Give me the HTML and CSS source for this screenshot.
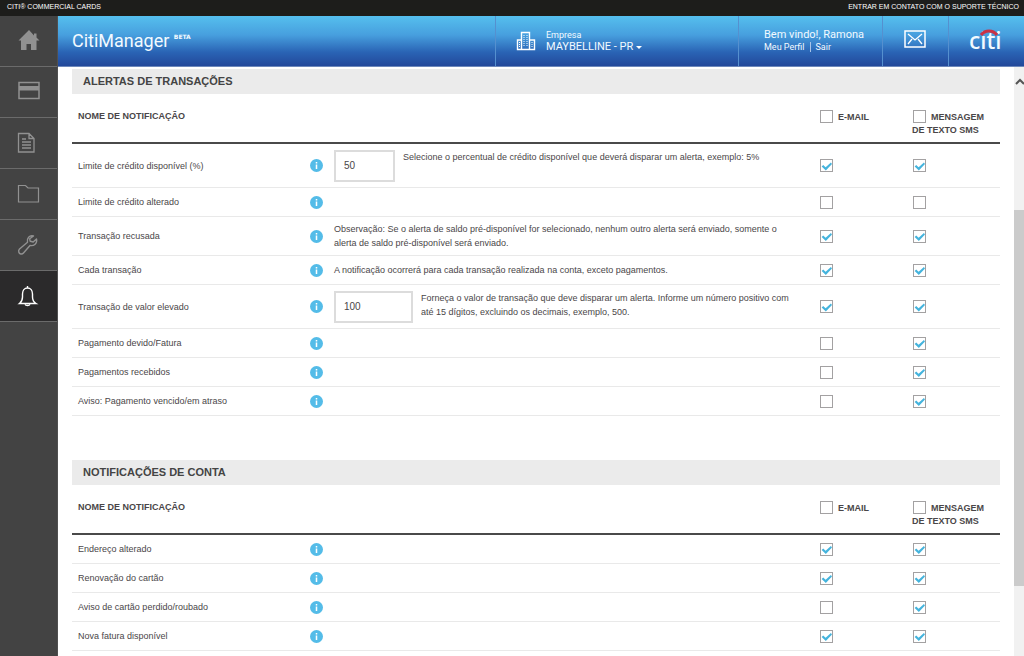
FILE: index.html
```
<!DOCTYPE html>
<html lang="pt-BR">
<head>
<meta charset="utf-8">
<title>CitiManager</title>
<link rel="stylesheet" href="styles.css">
</head>
<body>
<svg class="defs" aria-hidden="true">
  <symbol id="info" viewBox="0 0 13 13"><circle cx="6.500" cy="6.500" r="6.500" fill="#54bce8"/><path d="M6.500 5.500v4.500M6.500 3v1.500" stroke="#fff" stroke-width="1.500"/></symbol>
</svg>
<div class="topbar">
  <span>CITI® COMMERCIAL CARDS</span>
  <a href="#">ENTRAR EM CONTATO COM O SUPORTE TÉCNICO</a>
</div>
<div class="app">
  <nav class="sidebar" aria-label="Principal">
    <a class="nav-item" href="#" aria-label="Início"><svg width="24" height="24" viewBox="0 0 24 24"><path fill="#919191" d="M12 1 1.500 11.500H4v9.500h5.500v-6h4.500v6h5.500v-9.500h3L19.500 8.500V4.500H17v2z"/></svg></a>
    <a class="nav-item" href="#" aria-label="Cartões"><svg width="24" height="24" viewBox="0 0 24 24"><path fill="none" stroke="#919191" stroke-width="1.500" d="M2 2.500h20v16H2z"/><path fill="#919191" d="M2 6h20v4.500H2z"/></svg></a>
    <a class="nav-item" href="#" aria-label="Extratos"><svg width="24" height="24" viewBox="0 0 24 24" fill="none" stroke="#919191" stroke-width="1.300"><path d="M1.500 2.500h10.500l5 5v13.500h-15.500zM12 2.500v5h5M5 8h4M5 11h9M5 14h9M5 17h9"/></svg></a>
    <a class="nav-item" href="#" aria-label="Arquivos"><svg width="24" height="24" viewBox="0 0 24 24" fill="none" stroke="#919191" stroke-width="1.200"><path d="M1.500 3.500h7l2.500 2.500h10.500v14h-20z"/></svg></a>
    <a class="nav-item" href="#" aria-label="Ferramentas"><svg width="24" height="24" viewBox="0 0 24 24" fill="none" stroke="#919191" stroke-width="1.400" stroke-linejoin="round"><path d="M16.500 3c-4-1-7 2-6 6.200L2.500 16c-1.600 1.700-.8 4.500 1.300 5 1 .2 2-.2 2.700-1L13 12.500c4 .8 7.500-2 6.500-6.500l-3.300 3-3-.7-.5-2.500z"/></svg></a>
    <a class="nav-item active" href="#" aria-label="Alertas"><svg width="24" height="24" viewBox="0 0 24 24" fill="none" stroke="#fff" stroke-width="1.400"><path d="M2.500 19.500c2-1.500 3-3.500 3-6.500V10C5.500 6.500 7.500 4 10.500 4s5 2.500 5 6v3c0 3 1 5 3.500 6.500zM10.500 4V2M8 20.500c.8 1.300 4.200 1.300 5 0"/></svg></a>
  </nav>
  <div class="page">
    <header class="header">
      <div class="brand">CitiManager <sup>BETA</sup></div>
      <button class="company" type="button">
        <svg width="20" height="20" viewBox="0 0 20 20" fill="none" stroke="#fff" stroke-width="1.400"><path d="M5.500 18.500V1.500h8v17M5.500 9H1.500v9.500h17V9h-5"/><path stroke-dasharray="1 1" d="M8 4v12M11 4v12M3.500 11v6M16 11v6" stroke-width="1"/></svg>
        <span class="lines"><span class="small">Empresa</span><span class="name">MAYBELLINE - PR <i class="caret"></i></span></span>
      </button>
      <div class="user">
        <span>Bem vindo!, Ramona</span>
        <span class="links"><a href="#">Meu Perfil</a><a href="#">Sair</a></span>
      </div>
      <a class="mail" href="#" aria-label="Mensagens"><svg width="22" height="18" viewBox="0 0 22 18" fill="none" stroke="#fff"><path stroke-width="1.500" d="M1 1h20v16H1z"/><path stroke-width="1.300" d="m4 4 7 6 7-6M4 14l4-5M18 14l-4-5"/></svg></a>
      <div class="logo"><span>citi</span><svg width="18" height="7" viewBox="0 0 18 7" fill="none" stroke="#c93246" stroke-width="3"><path d="M1 6C5 .500 13 .500 17 6"/></svg></div>
    </header>
    <div class="body">
      <main class="content">
        <section>
          <h2>ALERTAS DE TRANSAÇÕES</h2>
          <table>
            <colgroup><col class="c-name"><col class="c-info"><col><col class="c-mail"><col class="c-sms"></colgroup>
            <thead><tr><th colspan="3">NOME DE NOTIFICAÇÃO</th><th><label><input type="checkbox">E-MAIL</label></th><th><label><input type="checkbox">MENSAGEM DE TEXTO SMS</label></th></tr></thead>
            <tbody>
              <tr class="tall"><td>Limite de crédito disponível (%)</td><td><svg class="info"><use href="#info"/></svg></td><td><div class="field"><input class="box short" type="text" value="50" aria-label="Percentual"><p>Selecione o percentual de crédito disponível que deverá disparar um alerta, exemplo: 5%</p></div></td><td><input type="checkbox" checked aria-label="E-mail"></td><td><input type="checkbox" checked aria-label="SMS"></td></tr>
              <tr><td>Limite de crédito alterado</td><td><svg class="info"><use href="#info"/></svg></td><td></td><td><input type="checkbox" aria-label="E-mail"></td><td><input type="checkbox" aria-label="SMS"></td></tr>
              <tr class="medium"><td>Transação recusada</td><td><svg class="info"><use href="#info"/></svg></td><td><p>Observação: Se o alerta de saldo pré-disponível for selecionado, nenhum outro alerta será enviado, somente o alerta de saldo pré-disponível será enviado.</p></td><td><input type="checkbox" checked aria-label="E-mail"></td><td><input type="checkbox" checked aria-label="SMS"></td></tr>
              <tr><td>Cada transação</td><td><svg class="info"><use href="#info"/></svg></td><td>A notificação ocorrerá para cada transação realizada na conta, exceto pagamentos.</td><td><input type="checkbox" checked aria-label="E-mail"></td><td><input type="checkbox" checked aria-label="SMS"></td></tr>
              <tr class="tall"><td>Transação de valor elevado</td><td><svg class="info"><use href="#info"/></svg></td><td><div class="field"><input class="box" type="text" value="100" aria-label="Valor"><p>Forneça o valor de transação que deve disparar um alerta. Informe um número positivo com até 15 dígitos, excluindo os decimais, exemplo, 500.</p></div></td><td><input type="checkbox" checked aria-label="E-mail"></td><td><input type="checkbox" checked aria-label="SMS"></td></tr>
              <tr><td>Pagamento devido/Fatura</td><td><svg class="info"><use href="#info"/></svg></td><td></td><td><input type="checkbox" aria-label="E-mail"></td><td><input type="checkbox" checked aria-label="SMS"></td></tr>
              <tr><td>Pagamentos recebidos</td><td><svg class="info"><use href="#info"/></svg></td><td></td><td><input type="checkbox" aria-label="E-mail"></td><td><input type="checkbox" checked aria-label="SMS"></td></tr>
              <tr><td>Aviso: Pagamento vencido/em atraso</td><td><svg class="info"><use href="#info"/></svg></td><td></td><td><input type="checkbox" aria-label="E-mail"></td><td><input type="checkbox" checked aria-label="SMS"></td></tr>
            </tbody>
          </table>
        </section>
        <section>
          <h2>NOTIFICAÇÕES DE CONTA</h2>
          <table>
            <colgroup><col class="c-name"><col class="c-info"><col><col class="c-mail"><col class="c-sms"></colgroup>
            <thead><tr><th colspan="3">NOME DE NOTIFICAÇÃO</th><th><label><input type="checkbox">E-MAIL</label></th><th><label><input type="checkbox">MENSAGEM DE TEXTO SMS</label></th></tr></thead>
            <tbody>
              <tr><td>Endereço alterado</td><td><svg class="info"><use href="#info"/></svg></td><td></td><td><input type="checkbox" checked aria-label="E-mail"></td><td><input type="checkbox" checked aria-label="SMS"></td></tr>
              <tr><td>Renovação do cartão</td><td><svg class="info"><use href="#info"/></svg></td><td></td><td><input type="checkbox" checked aria-label="E-mail"></td><td><input type="checkbox" checked aria-label="SMS"></td></tr>
              <tr><td>Aviso de cartão perdido/roubado</td><td><svg class="info"><use href="#info"/></svg></td><td></td><td><input type="checkbox" aria-label="E-mail"></td><td><input type="checkbox" checked aria-label="SMS"></td></tr>
              <tr><td>Nova fatura disponível</td><td><svg class="info"><use href="#info"/></svg></td><td></td><td><input type="checkbox" checked aria-label="E-mail"></td><td><input type="checkbox" checked aria-label="SMS"></td></tr>
            </tbody>
          </table>
        </section>
      </main>
      <div class="scroll" aria-hidden="true"><svg width="10" height="7" viewBox="0 0 10 7" fill="none" stroke="#555" stroke-width="2"><path d="m2 6 4-4 4 4"/></svg><div class="thumb"></div></div>
    </div>
  </div>
</div>
</body>
</html>
```
FILE: styles.css
```
* { box-sizing: border-box; }
body {
  margin: 0;
  height: 100vh;
  display: flex;
  flex-direction: column;
  overflow: hidden;
  background: #fff;
  color: #4a4648;
  font: 9px/14px "Liberation Sans", Arial, sans-serif;
}
a { color: inherit; text-decoration: none; }
h2, p { margin: 0; }
.defs { position: absolute; width: 0; height: 0; }
.topbar {
  display: flex;
  justify-content: space-between;
  padding: 0 5px 2px 7px;
  background: #1d1d1b;
  color: #fff;
  font-size: 7px;
}
.app { flex: 1; display: flex; min-height: 0; }
.sidebar { width: 58px; background: #434343; border-right: 1px solid #505050; }
.nav-item {
  display: flex;
  align-items: center;
  justify-content: center;
  height: 51px;
  border-bottom: 1px solid #6b6b6b;
}
.nav-item.active { background: #2b2a2b; }
.page { flex: 1; min-width: 0; display: flex; flex-direction: column; }
.header {
  display: flex;
  height: 51px;
  flex: none;
  background: linear-gradient(#55bfee, #479fde 38%, #2a64b5 72%, #23489a);
  border-bottom: 1px solid #6d88bb;
  color: #f2faff;
  font-family: "Noto Sans", sans-serif;
}
.brand { flex: 1; padding: 13px 14px; font: 18px/24px Roboto, sans-serif; }
.brand sup { font: bold 6px/8px "DejaVu Sans", sans-serif; vertical-align: 8px; }
.company {
  display: flex;
  align-items: center;
  gap: 10px;
  width: 243px;
  padding: 0 20px;
  border: 0;
  background: none;
  color: inherit;
  font: 11px/12px Roboto, sans-serif;
  text-align: left;
}
.header > * + * { border-left: 1px solid #5590cf; }
.lines { display: flex; flex-direction: column; }
.small { font-size: 9px; }
.caret {
  display: inline-block;
  border: 3px solid transparent;
  border-top-color: #fff;
  border-bottom: 0;
  vertical-align: 1px;
}
.user {
  display: flex;
  flex-direction: column;
  justify-content: center;
  width: 144px;
  padding-left: 25px;
  font: 11px/12px Roboto, sans-serif;
}
.links { font-size: 9px; }
.links a + a { margin-left: 6px; padding-left: 4px; border-left: 1px solid #a9c4e8; }
.mail { width: 66px; padding: 14px 21px; }
.logo { position: relative; width: 76px; padding: 12px 20px; font: 500 23px/24px "Noto Sans", sans-serif; }
.logo svg { position: absolute; left: 31px; top: 13px; }
.body { flex: 1; display: flex; min-height: 0; }
.content { flex: 1; min-width: 0; padding: 2px 14px 0; overflow: hidden; }
section { margin-bottom: 44px; }
h2 { padding: 0 11px; background: #ebebeb; color: #444; font-size: 11px; line-height: 25px; }
table { width: 100%; border-collapse: separate; border-spacing: 0; table-layout: fixed; }
.c-name { width: 238px; }
.c-info { width: 24px; }
.c-mail { width: 93px; }
.c-sms { width: 88px; }
th {
  height: 50px;
  padding: 16px 0 0;
  border-bottom: 2px solid #4a4a4a;
  line-height: 13px;
  text-align: left;
  vertical-align: top;
}
th:last-child { padding-right: 14px; }
td {
  height: 29px;
  padding: 0;
  border-bottom: 1px solid #e9e9e9;
}
th:first-child, td:first-child { padding-left: 6px; }
td:nth-child(3) { padding-right: 20px; }
.medium td { height: 39px; }
.tall td { height: 44px; }
.field { display: flex; gap: 8px; }
.info { display: block; width: 13px; height: 13px; }
.box {
  flex: none;
  width: 79px;
  height: 32px;
  padding: 0 8px;
  border: 2px solid #dcdcdc;
  color: inherit;
  font: 10px/14px "Liberation Sans", Arial, sans-serif;
}
.box.short { width: 61px; }
input[type="checkbox"] {
  appearance: none;
  display: block;
  width: 13px;
  height: 13px;
  margin: 0 0 0 1px;
  border: 1px solid #a3a1a2;
  background: #fff;
}
input[type="checkbox"]:checked::before {
  content: "";
  display: block;
  height: 11px;
  background: #45b4dd;
  clip-path: polygon(6% 58%, 20% 46%, 42% 66%, 90% 22%, 100% 36%, 44% 96%);
}
th input[type="checkbox"] { display: inline-block; margin-right: 5px; vertical-align: -3px; }
.scroll { width: 10px; padding-top: 11px; background: #f1f1f1; }
.scroll svg { display: block; }
.thumb { height: 65%; margin-top: 125px; background: #cbcbcb; }
```
